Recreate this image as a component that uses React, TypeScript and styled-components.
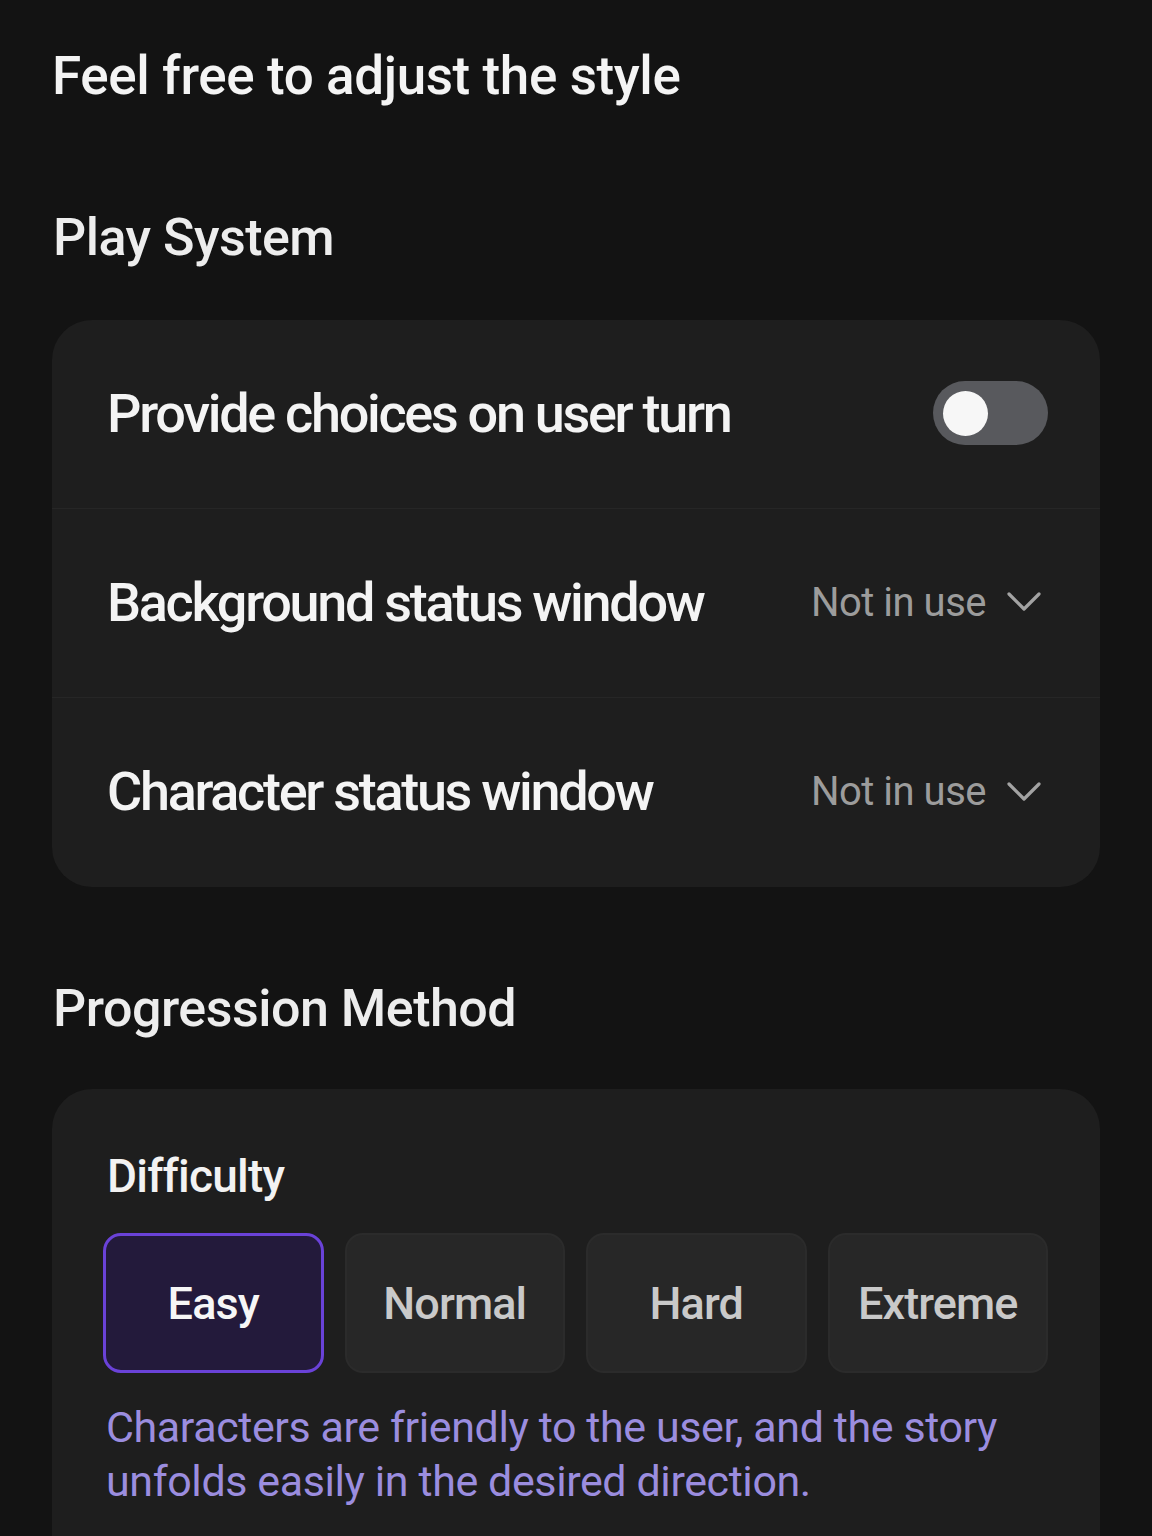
import React, { useState } from 'react';
import styled, { createGlobalStyle } from 'styled-components';

const GlobalStyle = createGlobalStyle`
  html, body {
    margin: 0;
    padding: 0;
    background: #131313;
  }
  body {
    font-family: Roboto, Inter, "Noto Sans", sans-serif;
    color: #f2f2f2;
    -webkit-font-smoothing: antialiased;
  }
`;

const Page = styled.div`
  width: 1152px;
  height: 1536px;
  overflow: hidden;
  box-sizing: border-box;
  padding: 40px 52px 0 52px;
  display: flex;
  flex-direction: column;
`;

const PageTitle = styled.h1`
  margin: 0;
  font-size: 53px;
  line-height: 72px;
  font-weight: 500;
  letter-spacing: -0.4px;
  color: #f4f4f4;
`;

const SectionTitle = styled.h2<{ gap: number }>`
  margin: ${p => p.gap}px 0 0 1px;
  font-size: 52px;
  line-height: 72px;
  font-weight: 500;
  letter-spacing: -0.5px;
  color: #ededed;
`;

const Card = styled.div<{ gap: number }>`
  margin-top: ${p => p.gap}px;
  background: #1e1e1e;
  border-radius: 40px;
  display: flex;
  flex-direction: column;
`;

const Row = styled.div`
  height: 189px;
  display: flex;
  align-items: center;
  justify-content: space-between;
  padding: 0 52px 2px 55px;
  box-sizing: border-box;
  border-bottom: 1px solid #262626;

  &:last-child {
    border-bottom: none;
  }
`;

const RowLabel = styled.span`
  font-size: 54px;
  font-weight: 500;
  letter-spacing: -2.3px;
  color: #f4f4f4;
`;

const Track = styled.button<{ on: boolean }>`
  width: 115px;
  height: 64px;
  border-radius: 32px;
  border: none;
  padding: 0 10px;
  background: ${p => (p.on ? '#6b45d6' : '#58595d')};
  display: flex;
  align-items: center;
  justify-content: ${p => (p.on ? 'flex-end' : 'flex-start')};
  cursor: pointer;
`;

const Knob = styled.span`
  width: 45px;
  height: 45px;
  border-radius: 50%;
  background: #f7f7f7;
`;

const Select = styled.div`
  display: flex;
  align-items: center;
  gap: 20px;
  margin-right: 6px;
  color: #9c9c9c;
  font-size: 40px;
  font-weight: 400;
  letter-spacing: -0.5px;
`;

const Chevron = () => (
  <svg width="36" height="22" viewBox="0 0 36 22" fill="none">
    <path d="M3 3 L18 18 L33 3" stroke="#a3a3a3" strokeWidth="3.2" strokeLinecap="round" strokeLinejoin="round" />
  </svg>
);

const DifficultyBody = styled.div`
  padding: 57px 52px 0 51px;
  height: 460px;
`;

const FieldLabel = styled.div`
  font-size: 46px;
  line-height: 60px;
  font-weight: 500;
  letter-spacing: -0.8px;
  color: #f2f2f2;
  padding-left: 4px;
`;

const Options = styled.div`
  margin-top: 27px;
  display: grid;
  grid-template-columns: repeat(4, 1fr);
  gap: 21px;
`;

const Option = styled.button<{ active: boolean }>`
  height: 140px;
  border-radius: 18px;
  box-sizing: border-box;
  border: ${p => (p.active ? '3px solid #6a42d8' : '2px solid #2b2b2b')};
  background: ${p => (p.active ? '#231a3b' : '#272727')};
  color: ${p => (p.active ? '#f6f6f6' : '#c9c9c9')};
  font-family: inherit;
  font-size: 45px;
  font-weight: 500;
  letter-spacing: -0.9px;
  cursor: pointer;
`;

const Description = styled.p`
  margin: 27px 0 0 3px;
  font-size: 43px;
  line-height: 54px;
  font-weight: 400;
  letter-spacing: -0.4px;
  color: #9b8ddf;
`;

const levels = ['Easy', 'Normal', 'Hard', 'Extreme'];

export default function App() {
  const [choices, setChoices] = useState(false);
  const [level, setLevel] = useState('Easy');

  return (
    <>
      <GlobalStyle />
      <Page>
        <PageTitle>Feel free to adjust the style</PageTitle>
        <SectionTitle gap={90}>Play System</SectionTitle>
        <Card gap={46}>
          <Row>
            <RowLabel>Provide choices on user turn</RowLabel>
            <Track on={choices} onClick={() => setChoices(c => !c)}>
              <Knob />
            </Track>
          </Row>
          <Row>
            <RowLabel>Background status window</RowLabel>
            <Select>Not in use <Chevron /></Select>
          </Row>
          <Row>
            <RowLabel>Character status window</RowLabel>
            <Select>Not in use <Chevron /></Select>
          </Row>
        </Card>
        <SectionTitle gap={86}>Progression Method</SectionTitle>
        <Card gap={44}>
          <DifficultyBody>
            <FieldLabel>Difficulty</FieldLabel>
            <Options>
              {levels.map(l => (
                <Option key={l} active={l === level} onClick={() => setLevel(l)}>{l}</Option>
              ))}
            </Options>
            <Description>
              Characters are friendly to the user, and the story unfolds easily in the desired direction.
            </Description>
          </DifficultyBody>
        </Card>
      </Page>
    </>
  );
}
